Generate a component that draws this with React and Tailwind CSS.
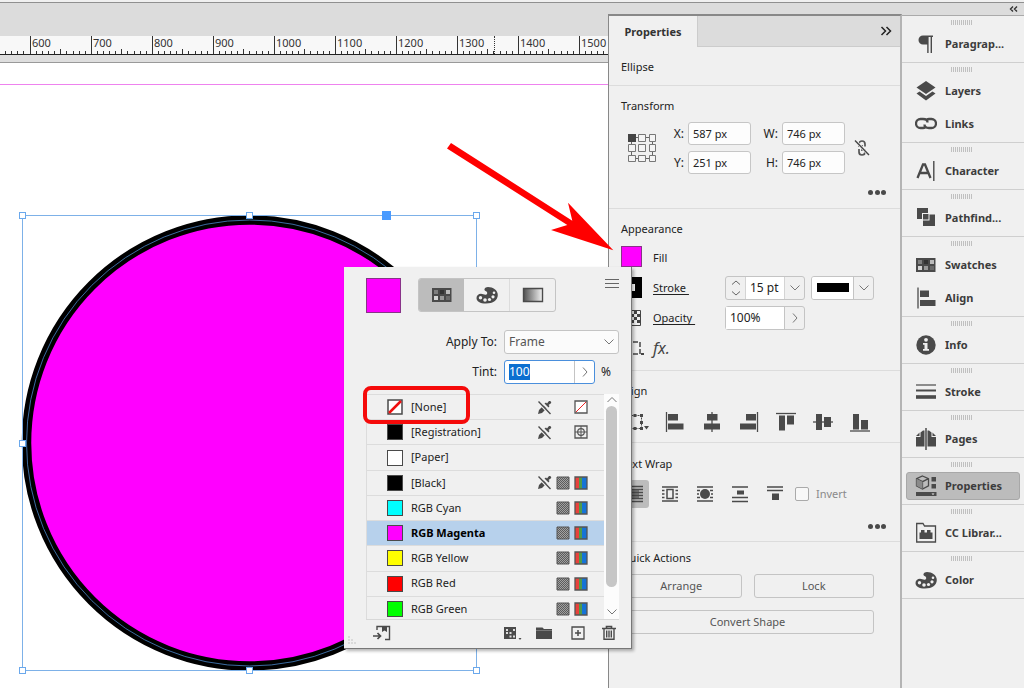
import React, { useEffect, useRef, useState } from "react";

const rulerMarks = [600, 700, 800, 900, 1000, 1100, 1200, 1300, 1400, 1500];

const swatches = [
  { name: "[None]", color: "none", locked: true, type: "none" },
  { name: "[Registration]", color: "#000000", locked: true, type: "registration" },
  { name: "[Paper]", color: "#ffffff" },
  { name: "[Black]", color: "#000000", locked: true, type: "rgb" },
  { name: "RGB Cyan", color: "#00ffff", type: "rgb" },
  { name: "RGB Magenta", color: "#ff00ff", type: "rgb" },
  { name: "RGB Yellow", color: "#ffff00", type: "rgb" },
  { name: "RGB Red", color: "#ff0000", type: "rgb" },
  { name: "RGB Green", color: "#00ff00", type: "rgb" },
];

const handles = [
  [22, 215],
  [249, 215],
  [476, 215],
  [22, 443],
  [22, 670],
  [249, 670],
  [476, 670],
];

const Icon = ({ w = 22, h = 22, children }) => (
  <svg width={w} height={h} viewBox={`0 0 ${w} ${h}`} fill="none" className="shrink-0" aria-hidden="true">
    {children}
  </svg>
);

const Chevron = ({ d = "M1.5 3.5L6 8L10.500 3.500" }) => (
  <Icon w={12} h={12}>
    <path d={d} stroke="#777" strokeWidth="1" />
  </Icon>
);

const right = "M4 1.500L8 6L4 10.500";

/* Dock icons */
const ParagraphIcon = () => (
  <Icon>
    <path d="M9 2.500H18V4H17V20H15.600V4H13.600V20H12.200V11.500H8A4.500 4.500 0 0 1 8 2.500Z" fill="#4a4a4a" />
  </Icon>
);

const LayersIcon = () => (
  <Icon>
    <path d="M11 1L20.500 7.500L11 14L1.500 7.500Z" fill="#4a4a4a" />
    <path d="M1.500 13.500L4.500 11.500L11 16L17.500 11.500L20.500 13.500L11 20.500Z" fill="#4a4a4a" />
  </Icon>
);

const LinksIcon = () => (
  <Icon>
    <path d="M12.500 9.500C12.500 7 10.500 6 8 6H5.500A4.500 4.500 0 0 0 5.500 15H8C9 15 9.500 14.800 10.500 14" stroke="#4a4a4a" strokeWidth="2.300" />
    <path d="M9.500 11.500C9.500 14 11.500 15 14 15H16.500A4.500 4.500 0 0 0 16.500 6H14C13 6 12.500 6.200 11.500 7" stroke="#4a4a4a" strokeWidth="2.300" />
  </Icon>
);

const CharacterIcon = () => (
  <Icon>
    <path d="M2.500 18L8 4.500H10L15.500 18M4.700 13H13.300" stroke="#4a4a4a" strokeWidth="2.300" />
    <path d="M18.800 1V21" stroke="#4a4a4a" strokeWidth="1.400" />
  </Icon>
);

const PathfinderIcon = () => (
  <Icon>
    <path d="M2 1H13V6H7V12H2Z" fill="#4a4a4a" />
    <path d="M14.500 7.500H20V19H8V13.500H14.500Z" fill="#4a4a4a" />
    <path d="M8 7H13.500V12.500H8Z" fill="#4a4a4a" />
  </Icon>
);

const SwatchesIcon = () => (
  <Icon>
    <path d="M1 4H20.500V18H1Z" fill="#4a4a4a" />
    <path d="M3 6H7V10H3Z" fill="#808080" />
    <path d="M9 6H13V10H9Z" fill="#333" />
    <path d="M15 6H19V10H15Z" fill="#bbb" />
    <path d="M3 12H7V16H3Z" fill="#d5d5d5" />
    <path d="M9 12H13V16H9Z" fill="#999" />
    <path d="M15 12H19V16H15Z" fill="#6a6a6a" />
  </Icon>
);

const AlignIcon = () => (
  <Icon>
    <path d="M3 0.500V21.500" stroke="#4a4a4a" strokeWidth="1.300" />
    <path d="M5 3.500H14V10H5ZM5 13H20.500V19H5Z" fill="#4a4a4a" />
  </Icon>
);

const InfoIcon = () => (
  <Icon>
    <circle cx="11" cy="11" r="9.700" fill="#4a4a4a" />
    <circle cx="11" cy="5.800" r="1.900" fill="#f0f0f0" />
    <path d="M8 9H12.500V15H14V16.800H8V15H9.500V10.700H8Z" fill="#f0f0f0" />
  </Icon>
);

const StrokeIcon = () => (
  <Icon>
    <path d="M1 4H21" stroke="#4a4a4a" strokeWidth="1.200" />
    <path d="M1 9.500H21" stroke="#4a4a4a" strokeWidth="2" />
    <path d="M1 16H21" stroke="#4a4a4a" strokeWidth="3.600" />
  </Icon>
);

const PagesIcon = () => (
  <Icon>
    <path d="M10 2.500V18.500H1V9H5.500V4.500L8 2.500ZM12 2.500V18.500H21V9H16.500V4.500L14 2.500Z" fill="#4a4a4a" />
    <path d="M4.500 4.500L1 8H4.500ZM17.500 4.500L21 8H17.500Z" fill="#4a4a4a" />
    <path d="M11 0V22" stroke="#f0f0f0" strokeWidth="3" />
    <path d="M11 0V22" stroke="#4a4a4a" strokeWidth="1.500" />
  </Icon>
);

const PropertiesIcon = () => (
  <Icon>
    <path d="M7.500 1L13.500 3.700V10.800L7.500 14L1.500 10.800V3.700ZM1.500 3.700L7.500 6.700L13.500 3.700M7.500 6.700V14" stroke="#4a4a4a" strokeWidth="1.300" />
    <path d="M1.500 3.700L7.500 6.700V14L1.500 10.800Z" fill="#8a8a8a" />
    <path d="M16.500 2H21V6.500H16.500ZM16.500 9H21V13.500H16.500ZM1 17H21.500V21H1Z" fill="#4a4a4a" />
    <path d="M16.500 18.500H19.500L18 20Z" fill="#f0f0f0" />
  </Icon>
);

const LibrariesIcon = () => (
  <Icon>
    <path d="M1.700 20V1.500H8L9.500 4H20.500V20Z" stroke="#4a4a4a" strokeWidth="1.300" />
    <path d="M4.500 17V10.500H6V8H9.500V10.500H12V8H15.500V10.500H17.500V17Z" fill="#4a4a4a" />
  </Icon>
);

const PaletteIcon = () => (
  <Icon>
    <path
      d="M10.500 10.500C12 9 11 7.500 9.500 7C7.500 6 8.500 3 12 3C17 3 21.800 6 21.800 11C21.800 16 17 19.500 10 19.500C4 19.500 0.500 17.500 0.500 14C0.500 11.500 2.500 9.800 5 9.800C7 9.800 9 11.500 10.500 10.500Z"
      fill="#4a4a4a"
    />
    <g fill="#f0f0f0">
      <circle cx="4.500" cy="13.800" r="1.700" />
      <circle cx="9" cy="16" r="1.800" />
      <circle cx="13.500" cy="15.500" r="1.600" />
      <circle cx="17" cy="12.800" r="1.600" />
      <circle cx="18" cy="8.800" r="1.300" />
    </g>
  </Icon>
);

const dockGroups = [
  [{ label: "Paragrap...", icon: ParagraphIcon }],
  [
    { label: "Layers", icon: LayersIcon },
    { label: "Links", icon: LinksIcon },
  ],
  [{ label: "Character", icon: CharacterIcon }],
  [{ label: "Pathfind...", icon: PathfinderIcon }],
  [
    { label: "Swatches", icon: SwatchesIcon },
    { label: "Align", icon: AlignIcon },
  ],
  [{ label: "Info", icon: InfoIcon }],
  [{ label: "Stroke", icon: StrokeIcon }],
  [{ label: "Pages", icon: PagesIcon }],
  [{ label: "Properties", icon: PropertiesIcon }],
  [{ label: "CC Librar...", icon: LibrariesIcon }],
  [{ label: "Color", icon: PaletteIcon }],
];

/* Align and text wrap buttons: path data for a 22px box */
const alignButtons = [
  { label: "Align left edges", line: "M2.500 1V21", box: "M4 3H14V9.500H4ZM4 12.500H19.500V18.500H4Z" },
  { label: "Align horizontal centers", line: "M11 1V21", box: "M6 3H16.500V9.500H6ZM3 12.500H19V18.500H3Z" },
  { label: "Align right edges", line: "M19.500 1V21", box: "M8 3H18V9.500H8ZM2 12.500H18V18.500H2Z" },
  { label: "Align top edges", line: "M1 2.500H21", box: "M4 4.500H10V19.500H4ZM12 4.500H19V13.500H12Z" },
  { label: "Align vertical centers", line: "M1 11H21", box: "M4 3H10V19H4ZM12 6H19V16H12Z" },
  { label: "Align bottom edges", line: "M1 20H21", box: "M4 3H10V18.500H4ZM12 9H19V18.500H12Z" },
];

const wrapButtons = [
  {
    label: "No text wrap",
    art: (
      <>
        <path d="M3 3.500H19M3 6.500H19M3 9.500H19M3 12.500H19M3 15.500H19M3 18.500H19" stroke="#4a4a4a" strokeWidth="1.500" />
        <path d="M7 7H15V15H7Z" fill="#4a4a4a" fillOpacity="0.6" />
      </>
    ),
  },
  {
    label: "Wrap around bounding box",
    art: (
      <>
        <path d="M3 4H19M3 18H19M3 7.500H5.500M3 11H5.500M3 14.500H5.500M16.500 7.500H19M16.500 11H19M16.500 14.500H19" stroke="#4a4a4a" strokeWidth="1.400" />
        <path d="M8 6.500H14V15.500H8Z" stroke="#4a4a4a" strokeWidth="1.500" />
      </>
    ),
  },
  {
    label: "Wrap around object shape",
    art: (
      <>
        <path d="M3 4H19M3 18H19M3 7.500H6M3 11H5M3 14.500H6M16 7.500H19M17 11H19M16 14.500H19" stroke="#4a4a4a" strokeWidth="1.400" />
        <circle cx="11" cy="11" r="5" fill="#4a4a4a" />
      </>
    ),
  },
  {
    label: "Jump object",
    art: (
      <>
        <path d="M3 4H19M3 14.500H19M3 18.500H19" stroke="#4a4a4a" strokeWidth="1.400" />
        <path d="M8 7.500H15V11.500H8Z" fill="#4a4a4a" />
      </>
    ),
  },
  {
    label: "Jump to next column",
    art: (
      <>
        <path d="M3 4H19M3 7.500H19" stroke="#4a4a4a" strokeWidth="1.400" />
        <path d="M8 10.500H15V17H8Z" fill="#4a4a4a" />
      </>
    ),
  },
];

const MoreButton = () => (
  <button aria-label="More options" className="flex h-3 w-5 items-center justify-between px-px">
    <span className="size-[5px] rounded-full bg-[#4a4a4a]" />
    <span className="size-[5px] rounded-full bg-[#4a4a4a]" />
    <span className="size-[5px] rounded-full bg-[#4a4a4a]" />
  </button>
);

function Field({ id, label, value }) {
  return (
    <div className="flex items-center">
      <label htmlFor={id} className="w-[31px] pr-1 text-right text-xs">
        {label}
      </label>
      <input
        id={id}
        defaultValue={value}
        className="h-[23px] w-[63px] rounded-[3px] border border-[#c6c6c6] bg-[#fdfdfd] px-1 outline-none"
      />
    </div>
  );
}

function Ruler() {
  return (
    <div className="relative flex h-[19px] overflow-hidden border-b border-[#222] bg-[#f8f8f8] pl-[30px]">
      <svg width="30" height="18" className="absolute bottom-0 left-0" aria-hidden="true">
        <path d="M5.500 15V18M11.500 15V18M17.500 15V18M23.500 15V18" stroke="#333" />
      </svg>
      {rulerMarks.map((mark) => (
        <div key={mark} className="relative h-[18px] w-[61px] shrink-0 border-l border-[#333]">
          <span className="block pl-px text-[11px] leading-[14px] text-[#333]">{mark}</span>
          <svg width="60" height="5" className="absolute bottom-0 left-0" aria-hidden="true">
            <path
              d="M5.500 2V5M11.500 2V5M17.500 2V5M23.500 2V5M29.500 0V5M35.500 2V5M42.500 2V5M48.500 2V5M54.500 2V5"
              stroke="#333"
            />
          </svg>
        </div>
      ))}
      <div className="absolute left-[494px] h-full border-l border-dotted border-[#333]" />
    </div>
  );
}

function Canvas() {
  return (
    <main className="flex min-w-0 flex-1 flex-col">
      <div className="h-[33px] bg-[#dcdcdc]" />
      <Ruler />
      <div className="h-2 border-b border-[#999] bg-[#dedede]" />
      <div className="relative flex-1 overflow-hidden bg-white">
        <div className="mt-[21px] h-px bg-[#ee82ee]" />
        <svg
          width="520"
          height="625"
          viewBox="0 63 520 625"
          className="absolute left-0 top-0"
          role="img"
          aria-label="Ellipse"
        >
          <circle cx="249.5" cy="443" r="223" fill="#ff00ff" stroke="#000" strokeWidth="9.500" />
          <circle cx="249.5" cy="443" r="223" fill="none" stroke="#4a86c8" strokeWidth="0.800" />
          <path d="M22.500 215.500H476.500V670.500H22.500Z" fill="none" stroke="#7db1e8" />
          {handles.map(([x, y]) => (
            <rect key={`${x}-${y}`} x={x - 3 + 0.5} y={y - 3 + 0.5} width="6" height="6" fill="#fff" stroke="#6aa8ec" />
          ))}
          <rect x="382" y="211" width="9" height="9" fill="#4a9bff" />
        </svg>
      </div>
    </main>
  );
}

const NoEditIcon = () => (
  <Icon w={15} h={15}>
    <path d="M1 14L2 10L6.500 5.500L9.500 8.500L5 13Z" fill="#4a4a4a" />
    <path d="M7.500 3.500L9 2.500L10 3.500L12 1C13.500 0.500 14.800 1.800 14 3.300L11.500 5L12.500 6L11.500 7.500Z" fill="#4a4a4a" />
    <path d="M1.500 2.500L12.500 14" stroke="#f0f0f0" strokeWidth="2" />
    <path d="M1.500 1.500L13.500 14" stroke="#4a4a4a" strokeWidth="1.300" />
  </Icon>
);

const ProcessIcon = () => (
  <Icon w={14} h={14}>
    <defs>
      <pattern id="halftone" width="2" height="2" patternUnits="userSpaceOnUse">
        <rect width="2" height="2" fill="#a2a2a2" />
        <rect width="1" height="1" fill="#5c5c5c" />
        <rect x="1" y="1" width="1" height="1" fill="#5c5c5c" />
      </pattern>
    </defs>
    <path d="M1 1H13V13H1Z" fill="url(#halftone)" stroke="#555" />
  </Icon>
);

function ModeIcon({ type }) {
  if (type === "none")
    return (
      <Icon w={14} h={14}>
        <path d="M1 1H13V13H1Z" fill="#fff" stroke="#555" strokeWidth="1.300" />
        <path d="M2 12L12 2" stroke="#e22" />
      </Icon>
    );
  if (type === "registration")
    return (
      <Icon w={14} h={14}>
        <path d="M1 1H13V13H1Z" stroke="#555" strokeWidth="1.300" />
        <circle cx="7" cy="7" r="3.300" stroke="#555" strokeWidth="1.200" />
        <path d="M7 1V13M1 7H13" stroke="#555" />
      </Icon>
    );
  return (
    <Icon w={14} h={14}>
      <path d="M1 1H5V13H1Z" fill="#e8423c" />
      <path d="M5 1H8V13H5Z" fill="#4f9a4b" />
      <path d="M8 1H13V13H8Z" fill="#1673d6" />
      <path d="M1 1H13V13H1Z" stroke="#555" strokeWidth="1.300" />
    </Icon>
  );
}

function SwatchPopup() {
  const [selected, setSelected] = useState("RGB Magenta");
  const tintRef = useRef(null);

  useEffect(() => {
    tintRef.current.focus();
    tintRef.current.select();
  }, []);

  return (
    <section
      aria-label="Fill swatches"
      className="absolute -left-[265px] top-[251px] z-10 w-[288px] border-r border-b border-[#777] bg-[#f0f0f0] pt-[11px] pr-3 pb-1.5 pl-[22px] shadow-[2px_2px_3px_rgba(0,0,0,0.3)]"
    >
      <div className="flex items-start">
        <span className="size-[35px] border border-[#883388] bg-[#ff00ff]" />
        <div className="ml-[17px] flex h-[34px] w-[138px] overflow-hidden rounded-[3px] border border-[#c4c4c4]">
          <button aria-label="Swatches" className="flex flex-1 items-center justify-center bg-[#bcbcbc]">
            <SwatchesIcon />
          </button>
          <button aria-label="Color" className="flex flex-1 items-center justify-center border-r border-[#dcdcdc]">
            <PaletteIcon />
          </button>
          <button aria-label="Gradient" className="flex flex-1 items-center justify-center">
            <Icon>
              <defs>
                <linearGradient id="grad">
                  <stop offset="0" stopColor="#505050" />
                  <stop offset="1" stopColor="#f4f4f4" />
                </linearGradient>
              </defs>
              <path d="M1.500 4.500H20.500V17.500H1.500Z" fill="url(#grad)" stroke="#4a4a4a" strokeWidth="1.400" />
            </Icon>
          </button>
        </div>
        <button aria-label="Panel menu" className="ml-auto">
          <Icon w={14} h={12}>
            <path d="M0 1.500H14M0 5.500H14M0 9.500H14" stroke="#666" strokeWidth="1.200" />
          </Icon>
        </button>
      </div>

      <div className="mt-[17px] flex items-center justify-end">
        <label htmlFor="apply-to" className="pr-[7px] text-xs">
          Apply To:
        </label>
        <div className="relative">
          <select
            id="apply-to"
            className="h-6 w-[115px] appearance-none rounded-[3px] border border-[#c4c4c4] bg-[#fbfbfb] px-1 text-xs text-[#555] outline-none"
          >
            <option>Frame</option>
          </select>
          <span className="pointer-events-none absolute top-1.5 right-1">
            <Chevron />
          </span>
        </div>
      </div>

      <div className="mt-1.5 flex items-center justify-end">
        <label htmlFor="tint" className="pr-[7px] text-xs">
          Tint:
        </label>
        <div className="flex h-6 w-[91px] rounded-[3px] border border-[#4a8fdc] bg-white">
          <input
            id="tint"
            ref={tintRef}
            defaultValue="100"
            className="min-w-0 flex-1 px-1 text-xs outline-none selection:bg-[#0b6fd0] selection:text-white"
          />
          <button aria-label="Tint slider" className="flex w-5 items-center justify-center border-l border-[#c4c4c4]">
            <Chevron d={right} />
          </button>
        </div>
        <span className="w-6 pl-1.5 text-xs">%</span>
      </div>

      <div className="mt-2.5 flex h-[226px] overflow-hidden border-b border-[#d8d8d8]">
        <ul className="flex h-[228px] flex-1 flex-col border-t border-l border-[#dcdcdc]">
          {swatches.map((s) => (
            <li key={s.name} className="flex-1 border-b border-[#dcdcdc]">
              <button
                onClick={() => setSelected(s.name)}
                className={
                  "flex h-full w-full items-center pr-4 pl-5 text-left " +
                  (selected === s.name ? "bg-[#b7d1ec] font-bold text-black" : "")
                }
              >
                {s.color === "none" ? (
                  <Icon w={16} h={16}>
                    <path d="M1 1H15V15H1Z" fill="#fff" stroke="#4a4a4a" strokeWidth="1.500" />
                    <path d="M2 14L14 2" stroke="#f01010" strokeWidth="2.500" />
                  </Icon>
                ) : (
                  <span className="size-4 border border-[#4a4a4a]" style={{ backgroundColor: s.color }} />
                )}
                <span className="flex-1 pl-2">{s.name}</span>
                <span className="flex items-center gap-1">
                  {s.locked && <NoEditIcon />}
                  <span className="flex w-[14px]">{s.type === "rgb" && <ProcessIcon />}</span>
                  <span className="flex w-[14px]">{s.type && <ModeIcon type={s.type} />}</span>
                </span>
              </button>
            </li>
          ))}
        </ul>
        <div className="flex w-[15px] flex-col items-center bg-[#fcfcfc]">
          <Chevron d="M1.500 8L6 3.500L10.500 8" />
          <span className="h-[181px] w-[11px] rounded-full bg-[#c6c6c6]" />
          <span className="mt-auto pb-px">
            <Chevron />
          </span>
        </div>
      </div>

      <div className="mt-1 flex items-center gap-3 pl-1.5">
        <button aria-label="Add to library" className="mr-auto">
          <Icon w={20} h={18}>
            <path d="M5 6V2.500H17.500V15.500H13" stroke="#4a4a4a" strokeWidth="1.400" />
            <path d="M10 2H15V8L12.500 6.500L10 8Z" fill="#4a4a4a" />
            <path d="M1 12H8M5.500 9L8.500 12L5.500 15" stroke="#4a4a4a" strokeWidth="1.700" />
          </Icon>
        </button>
        <button aria-label="Swatch views">
          <Icon w={20} h={18}>
            <path d="M1 3H13V15H1Z" fill="#4a4a4a" />
            <path d="M3 5H5V7H3ZM10 5H12V7H10ZM3 8H5V10H3ZM6.500 8H8.500V10H6.500ZM6.500 11.500H8.500V13.500H6.500ZM10 11.500H12V13.500H10Z" fill="#ddd" />
            <path d="M15.500 14H18.500L17 16Z" fill="#4a4a4a" />
          </Icon>
        </button>
        <button aria-label="New color group">
          <Icon w={22} h={18}>
            <path d="M1 3.500H7.500L9 5H17V15H1Z" fill="#4a4a4a" />
            <path d="M1 6.500H17" stroke="#999" strokeWidth="0.600" />
          </Icon>
        </button>
        <button aria-label="New swatch">
          <Icon w={20} h={18}>
            <path d="M3 3H15V15H3Z" stroke="#4a4a4a" strokeWidth="1.300" />
            <path d="M9 6V12M6 9H12" stroke="#4a4a4a" strokeWidth="1.500" />
          </Icon>
        </button>
        <button aria-label="Delete swatch">
          <Icon w={18} h={18}>
            <path d="M1 4.500H15M5.500 4V2.500H10.500V4" stroke="#4a4a4a" strokeWidth="1.600" />
            <path d="M3 5V15.300H13V5M5.700 6.500V13.500M8 6.500V13.500M10.300 6.500V13.500" stroke="#4a4a4a" strokeWidth="1.400" />
          </Icon>
        </button>
      </div>

      {/* Resize grip */}
      <svg width="8" height="8" className="absolute bottom-1 left-1" aria-hidden="true">
        <path d="M0 1H2M0 4H2M3 4H5M0 7H2M3 7H5M6 7H8" stroke="#c4c4c4" />
      </svg>

      {/* Highlight around [None] */}
      <div className="pointer-events-none absolute top-[119px] left-[19px] h-[38px] w-[107px] rounded-lg border-4 border-[#f50a0a]" />
    </section>
  );
}

function PropertiesPanel() {
  return (
    <aside className="w-[294px] shrink-0 bg-[#dcdcdc] pt-[11px]">
      <div className="relative flex h-full flex-col border-t-2 border-r-2 border-l border-t-[#888] border-r-[#b4b4b4] border-l-[#888] bg-[#f0f0f0]">
        <header className="flex h-[31px]">
          <h2 className="flex w-[88px] items-center justify-center pt-0.5 font-bold text-[#333]">Properties</h2>
          <div className="flex flex-1 items-center justify-end border-b border-l border-[#ccc] bg-[#dcdcdc] pr-2">
            <button aria-label="Collapse panel">
              <Icon w={12} h={12}>
                <path d="M1.500 2L5.500 6L1.500 10M6.500 2L10.500 6L6.500 10" stroke="#222" strokeWidth="1.500" />
              </Icon>
            </button>
          </div>
        </header>

        <h3 className="h-[39px] border-b border-[#dcdcdc] pl-3 leading-10">Ellipse</h3>

        <div className="h-[123px] border-b border-[#dcdcdc] pt-3 pl-3">
          <h3 className="leading-4">Transform</h3>
          <div className="flex items-center pt-2">
            <svg width="30" height="30" className="ml-1.5" aria-hidden="true">
              <path d="M4.500 4.500H25.500V25.500H4.500Z" fill="none" stroke="#666" />
              <path
                d="M11.500 1.500H18.500V8.500H11.500ZM22.500 1.500H28.500V8.500H22.500ZM1.500 11.500H8.500V18.500H1.500ZM11.500 11.500H18.500V18.500H11.500ZM22.500 11.500H28.500V18.500H22.500ZM1.500 22.500H8.500V28.500H1.500ZM11.500 22.500H18.500V28.500H11.500ZM22.500 22.500H28.500V28.500H22.500Z"
                fill="#f4f4f4"
                stroke="#777"
              />
              <path d="M1 1H9V9H1Z" fill="#444" />
            </svg>
            <div className="grid grid-cols-2 gap-y-1.5">
              <Field id="pos-x" label="X:" value="587 px" />
              <Field id="size-w" label="W:" value="746 px" />
              <Field id="pos-y" label="Y:" value="251 px" />
              <Field id="size-h" label="H:" value="746 px" />
            </div>
            <button aria-label="Constrain proportions" className="ml-2">
              <Icon w={18} h={20}>
                <path d="M6 9V6A3 3 0 0 1 12 6V8.500M6 11V14A3 3 0 0 0 12 14V11.500M9 7V13" stroke="#555" strokeWidth="1.700" />
                <path d="M2 2.500L16 17" stroke="#f0f0f0" strokeWidth="3" />
                <path d="M2 2.500L16 17" stroke="#444" strokeWidth="1.400" />
              </Icon>
            </button>
          </div>
          <div className="flex justify-end pt-3 pr-[13px]">
            <MoreButton />
          </div>
        </div>

        <div className="h-[162px] border-b border-[#dcdcdc] pt-3 pl-3">
          <h3 className="leading-4">Appearance</h3>
          <div className="mt-0.5 flex h-[34px] items-center">
            <button aria-label="Fill color" className="size-[21px] border border-[#883388] bg-[#ff00ff]" />
            <span className="pt-1 pl-[11px]">Fill</span>
          </div>
          <div className="flex h-[29px] items-center">
            <button aria-label="Stroke color" className="flex size-[21px] items-center justify-center bg-black">
              <span className="size-[7px] bg-white" />
            </button>
            <a href="#stroke" className="w-[83px] pt-0.5 pl-[11px] underline underline-offset-2">
              Stroke&nbsp;
            </a>
            <div className="flex h-6 w-20 rounded-[3px] border border-[#c4c4c4]">
              <button aria-label="Change stroke weight" className="flex w-[19px] items-center justify-center">
                <Icon w={12} h={20}>
                  <path d="M2 6.500L6 3L10 6.500M2 13.500L6 17L10 13.500" stroke="#666" />
                </Icon>
              </button>
              <input
                aria-label="Stroke weight"
                defaultValue="15 pt"
                className="w-10 border-x border-[#d4d4d4] bg-white pl-1 text-xs outline-none"
              />
              <button aria-label="Stroke weights" className="flex flex-1 items-center justify-center">
                <Chevron />
              </button>
            </div>
            <button
              aria-label="Stroke type"
              className="ml-1.5 flex h-6 w-[63px] items-center overflow-hidden rounded-[3px] border border-[#c4c4c4]"
            >
              <span className="flex h-full w-[42px] items-center justify-center border-r border-[#c4c4c4] bg-white">
                <span className="h-[9px] w-8 bg-black" />
              </span>
              <span className="pl-1">
                <Chevron />
              </span>
            </button>
          </div>
          <div className="flex h-[31px] items-center">
            <Icon w={21} h={20}>
              <path d="M6.500 2.500H19.500V17.500H6.500Z" stroke="#444" />
              <path d="M7 3H10V6H7ZM13 3H16V6H13ZM10 6H13V9H10ZM16 6H19V9H16ZM7 9H10V12H7ZM13 9H16V12H13ZM10 12H13V15H10ZM16 12H19V15H16Z" fill="#444" />
            </Icon>
            <a href="#opacity" className="w-[83px] pt-0.5 pl-[11px] underline underline-offset-2">
              Opacity&nbsp;
            </a>
            <div className="flex h-6 w-20 rounded-[3px] border border-[#c4c4c4]">
              <input aria-label="Opacity" defaultValue="100%" className="w-[58px] bg-white pl-1 text-xs outline-none" />
              <button
                aria-label="Opacity slider"
                className="flex flex-1 items-center justify-center border-l border-[#c4c4c4]"
              >
                <Chevron d={right} />
              </button>
            </div>
          </div>
          <div className="flex h-[30px] items-center">
            <Icon w={24} h={18}>
              <path d="M5 3H19V15H5Z" stroke="#444" strokeWidth="1.500" strokeDasharray="5 2" />
              <path d="M20 14H23V16H20Z" fill="#444" />
            </Icon>
            <button className="flex items-end pl-2 text-base text-[#444] italic" aria-label="Effects">
              fx.
            </button>
          </div>
        </div>

        <div className="h-[72px] border-b border-[#dcdcdc] pt-3 pl-3">
          <h3 className="leading-4">Align</h3>
          <div className="flex items-center pt-3">
            <button aria-label="Align to" className="mr-[15px]">
              <Icon w={28} h={22}>
                <path d="M7.500 4.500H20.500V17.500H7.500Z" stroke="#4a4a4a" strokeDasharray="2 1" />
                <path d="M6 3H9V6H6ZM12.500 3H15.500V6H12.500ZM19 3H22V6H19ZM19 10H22V13H19ZM6 16H9V19H6ZM12.500 16H15.500V19H12.500ZM19 16H22V19H19ZM23 15H28L25.500 18.500Z" fill="#4a4a4a" />
              </Icon>
            </button>
            <div className="flex gap-[15px]">
              {alignButtons.map((b) => (
                <button key={b.label} aria-label={b.label}>
                  <Icon>
                    <path d={b.line} stroke="#4a4a4a" strokeWidth="1.300" />
                    <path d={b.box} fill="#4a4a4a" />
                  </Icon>
                </button>
              ))}
            </div>
          </div>
        </div>

        <div className="h-[99px] border-b border-[#dcdcdc] pt-[13px] pl-3">
          <h3 className="leading-4">Text Wrap</h3>
          <div className="flex items-center pt-2">
            <div className="flex gap-[7px]">
              {wrapButtons.map((b, i) => (
                <button
                  key={b.label}
                  aria-label={b.label}
                  className={"flex size-7 items-center justify-center rounded-[3px] " + (i === 0 ? "bg-[#bcbcbc]" : "")}
                >
                  <Icon>{b.art}</Icon>
                </button>
              ))}
            </div>
            <label className="flex items-center pl-1.5 text-[#8a8a8a]">
              <input
                type="checkbox"
                className="size-[14px] appearance-none rounded-xs border border-[#aaa] bg-[#f8f8f8]"
              />
              <span className="pl-[7px]">Invert</span>
            </label>
          </div>
          <div className="flex justify-end pt-3 pr-[13px]">
            <MoreButton />
          </div>
        </div>

        <div className="pt-2 pl-3">
          <h3 className="leading-4">Quick Actions</h3>
          <div className="grid grid-cols-2 gap-3 pt-2 pr-[26px] text-[#555]">
            <button className="h-6 rounded-[3px] border border-[#c4c4c4]">Arrange</button>
            <button className="h-6 rounded-[3px] border border-[#c4c4c4]">Lock</button>
            <button className="col-span-2 h-6 rounded-[3px] border border-[#c4c4c4]">Convert Shape</button>
          </div>
        </div>

        <SwatchPopup />

        {/* Arrow pointing at the fill color */}
        <svg
          width="170"
          height="112"
          viewBox="446 141 170 112"
          className="pointer-events-none absolute top-[125px] -left-[163px]"
          aria-hidden="true"
        >
          <path d="M451 143L572.300 220.700L568 202.700L613.300 250.300L551 230L567.300 225L447 148.500Z" fill="#ff0000" />
        </svg>
      </div>
    </aside>
  );
}

function Dock() {
  return (
    <nav className="w-[122px] shrink-0 bg-[#f0f0f0]">
      <div className="flex h-[13px] items-center justify-end border-b border-[#aaa] bg-[#dcdcdc] pr-1.5">
        <button aria-label="Expand dock">
          <Icon w={9} h={8}>
            <path d="M4 1.500L1.500 4L4 6.500M8 1.500L5.500 4L8 6.500" stroke="#333" strokeWidth="1.400" />
          </Icon>
        </button>
      </div>
      {dockGroups.map((group) => (
        <div key={group[0].label} className="relative flex flex-col gap-px border-b border-[#cfcfcf] px-1 pt-3 pb-0.5">
          <svg width="22" height="5" className="absolute top-1 left-[49px]" aria-hidden="true">
            <path d="M0 2.500H22" stroke="#c0c0c0" strokeWidth="5" strokeDasharray="1 1" />
          </svg>
          {group.map(({ label, icon: DockIcon }) => (
            <button
              key={label}
              className={
                "my-0.5 flex h-7 items-center gap-2 rounded-[3px] border pl-2 text-left font-bold text-[#3c3c3c] " +
                (label === "Properties" ? "border-[#a8a8a8] bg-[#bcbcbc]" : "border-transparent")
              }
            >
              <DockIcon />
              {label}
            </button>
          ))}
        </div>
      ))}
    </nav>
  );
}

export default function App() {
  return (
    <div className="flex min-h-screen flex-col overflow-hidden bg-[#f0f0f0] font-['Noto_Sans','Open_Sans',sans-serif] text-[11px] text-[#222]">
      <div className="h-[3px] border-b border-[#909090]" />
      <div className="flex flex-1">
        <Canvas />
        <PropertiesPanel />
        <Dock />
      </div>
    </div>
  );
}
